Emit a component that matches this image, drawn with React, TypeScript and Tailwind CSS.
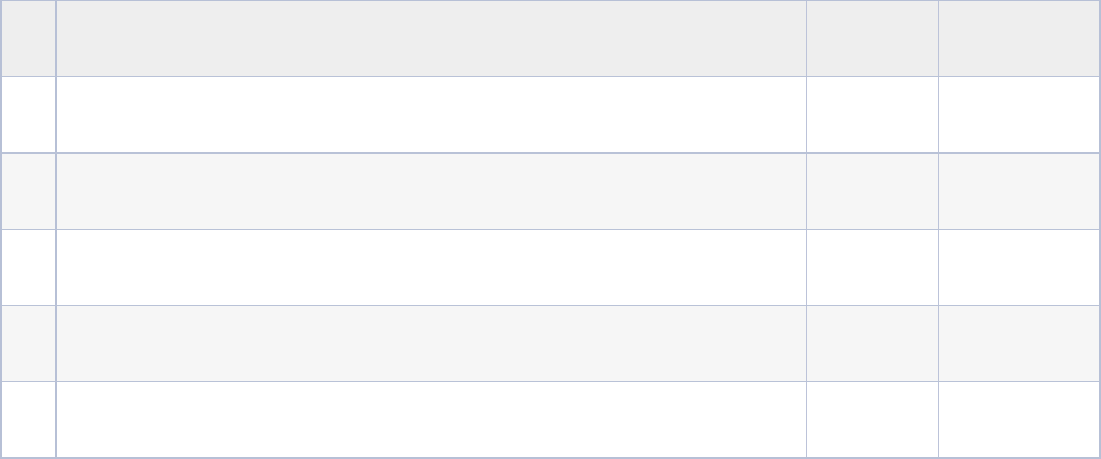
const rows = [0, 1, 2, 3, 4]

function Cells({ bg }: { bg: string }) {
  return (
    <>
      <div className={`w-[53px] shrink-0 ${bg}`} />
      <div className="w-[2px] shrink-0 bg-[#b7c0d6]" />
      <div className={`w-[749px] shrink-0 ${bg}`} />
      <div className="w-px shrink-0 bg-[#bcc3d9]" />
      <div className={`w-[131px] shrink-0 ${bg}`} />
      <div className="w-px shrink-0 bg-[#bcc3d9]" />
      <div className={`flex-1 ${bg}`} />
    </>
  )
}

export default function App() {
  return (
    <div className="flex h-[459px] w-[1101px] flex-col border-t border-r-2 border-b-2 border-l-2 border-[#b7c0d6] bg-white">
      <div className="flex h-[75px] shrink-0">
        <Cells bg="bg-[#eeeeee]" />
      </div>
      {rows.map((i) => (
        <div
          key={i}
          className={`flex shrink-0 ${i === 1 ? 'h-[77px] border-t-2' : 'h-[76px] border-t'} border-[#b9c2d7]`}
        >
          <Cells bg={i % 2 === 1 ? 'bg-[#f6f6f6]' : 'bg-white'} />
        </div>
      ))}
    </div>
  )
}
